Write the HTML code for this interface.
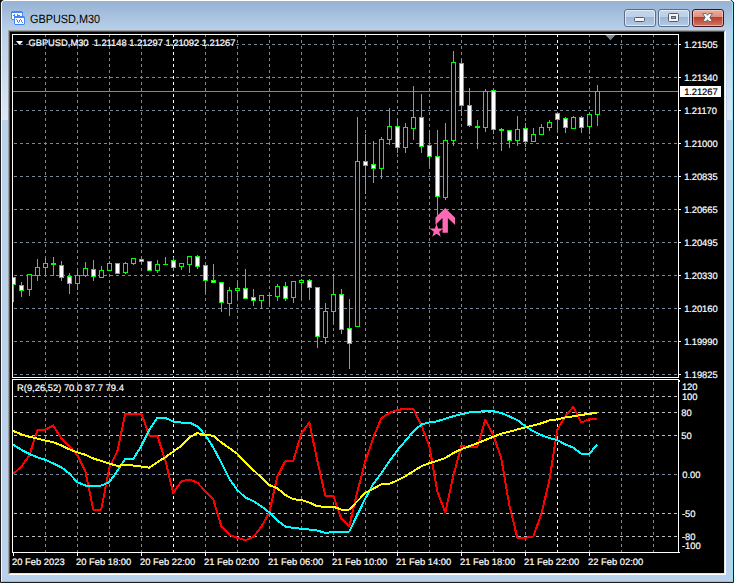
<!DOCTYPE html>
<html><head><meta charset="utf-8"><title>GBPUSD,M30</title>
<style>
html,body{margin:0;padding:0;}
body{text-rendering:geometricPrecision;width:736px;height:583px;position:relative;overflow:hidden;background:#fff;font-family:"Liberation Sans",sans-serif;}
#win{position:absolute;left:0;top:-1px;width:734px;height:584px;box-sizing:border-box;border:1px solid #1c1c1c;border-radius:5px 5px 0 0;background:linear-gradient(#96b2d3 1px,#b9d1ea 31px,#b9d1ea 100%);overflow:hidden;}
#hl{position:absolute;left:0;top:0;right:0;bottom:0;box-sizing:border-box;border-top:1px solid #fff;border-left:1px solid #f4f8fc;border-right:1px solid #8fe4f6;border-bottom:1px solid #58d8f2;border-radius:4px 4px 0 0;}
#client{position:absolute;left:8px;top:30px;width:718px;height:545px;background:#000;box-sizing:border-box;border-top:1px solid #a0a0a0;border-left:1px solid #a0a0a0;border-right:1px solid #fff;border-bottom:1px solid #fff;}
#client2{position:absolute;left:9px;top:31px;width:716px;height:543px;box-sizing:border-box;border-top:1px solid #505050;border-left:1px solid #505050;border-right:1px solid #e3e3e3;border-bottom:1px solid #e3e3e3;}
.t{position:absolute;color:#fff;-webkit-text-stroke:0.2px currentColor;font-size:9.4px;line-height:10px;letter-spacing:0px;white-space:pre;}
#title{position:absolute;left:30px;top:12px;font-size:12px;line-height:14px;color:#000;white-space:pre;transform:scaleX(0.905);transform-origin:0 0;}
.btn{position:absolute;top:9px;height:18px;width:32px;box-sizing:border-box;border:1px solid #5c6b87;border-radius:3px;background:linear-gradient(#c3d5ea 0,#bcd0e7 7px,#9bb6d5 7px,#b3cbe5 16px);box-shadow:inset 0 0 0 1px rgba(235,243,252,.75);}
.btn.x{border-color:#3f1222;background:linear-gradient(#eaaea0 0,#de9080 7px,#b93d25 7px,#cf7862 16px);box-shadow:inset 0 0 0 1px rgba(255,220,210,.55);}
</style></head><body>
<div style="position:absolute;left:0;top:0;width:4px;height:4px;background:#111"></div>
<div style="position:absolute;left:730px;top:0;width:4px;height:3px;background:linear-gradient(225deg,#fff 0,#fff 35%,#222 36%,#222 100%)"></div>
<div id="win"><div id="hl"></div></div>

<div style="position:absolute;left:2px;top:30px;width:6px;height:90px;background:linear-gradient(rgba(255,255,255,0),rgba(255,255,255,.5))"></div><div style="position:absolute;left:727px;top:30px;width:5px;height:90px;background:linear-gradient(rgba(255,255,255,0),rgba(255,255,255,.5))"></div>
<div id="client"></div><div id="client2"></div>
<svg width="736" height="583" viewBox="0 0 736 583" style="position:absolute;left:0;top:0" shape-rendering="crispEdges">
<line x1="14" y1="44.5" x2="678" y2="44.5" stroke="#778899" stroke-width="1" stroke-dasharray="3 3"/>
<line x1="14" y1="77.5" x2="678" y2="77.5" stroke="#778899" stroke-width="1" stroke-dasharray="3 3"/>
<line x1="14" y1="110.5" x2="678" y2="110.5" stroke="#778899" stroke-width="1" stroke-dasharray="3 3"/>
<line x1="14" y1="143.5" x2="678" y2="143.5" stroke="#778899" stroke-width="1" stroke-dasharray="3 3"/>
<line x1="14" y1="176.5" x2="678" y2="176.5" stroke="#778899" stroke-width="1" stroke-dasharray="3 3"/>
<line x1="14" y1="209.5" x2="678" y2="209.5" stroke="#778899" stroke-width="1" stroke-dasharray="3 3"/>
<line x1="14" y1="242.5" x2="678" y2="242.5" stroke="#778899" stroke-width="1" stroke-dasharray="3 3"/>
<line x1="14" y1="275.5" x2="678" y2="275.5" stroke="#778899" stroke-width="1" stroke-dasharray="3 3"/>
<line x1="14" y1="308.5" x2="678" y2="308.5" stroke="#778899" stroke-width="1" stroke-dasharray="3 3"/>
<line x1="14" y1="341.5" x2="678" y2="341.5" stroke="#778899" stroke-width="1" stroke-dasharray="3 3"/>
<line x1="14" y1="374.5" x2="678" y2="374.5" stroke="#778899" stroke-width="1" stroke-dasharray="3 3"/>
<line x1="45.5" y1="34" x2="45.5" y2="377" stroke="#778899" stroke-width="1" stroke-dasharray="3 3"/>
<line x1="45.5" y1="382" x2="45.5" y2="552" stroke="#778899" stroke-width="1" stroke-dasharray="3 3"/>
<line x1="77.5" y1="34" x2="77.5" y2="377" stroke="#778899" stroke-width="1" stroke-dasharray="3 3"/>
<line x1="77.5" y1="382" x2="77.5" y2="552" stroke="#778899" stroke-width="1" stroke-dasharray="3 3"/>
<line x1="109.5" y1="34" x2="109.5" y2="377" stroke="#778899" stroke-width="1" stroke-dasharray="3 3"/>
<line x1="109.5" y1="382" x2="109.5" y2="552" stroke="#778899" stroke-width="1" stroke-dasharray="3 3"/>
<line x1="141.5" y1="34" x2="141.5" y2="377" stroke="#778899" stroke-width="1" stroke-dasharray="3 3"/>
<line x1="141.5" y1="382" x2="141.5" y2="552" stroke="#778899" stroke-width="1" stroke-dasharray="3 3"/>
<line x1="173.5" y1="34" x2="173.5" y2="377" stroke="#ffffff" stroke-width="1" stroke-dasharray="3 3"/>
<line x1="173.5" y1="382" x2="173.5" y2="552" stroke="#ffffff" stroke-width="1" stroke-dasharray="3 3"/>
<line x1="205.5" y1="34" x2="205.5" y2="377" stroke="#778899" stroke-width="1" stroke-dasharray="3 3"/>
<line x1="205.5" y1="382" x2="205.5" y2="552" stroke="#778899" stroke-width="1" stroke-dasharray="3 3"/>
<line x1="237.5" y1="34" x2="237.5" y2="377" stroke="#778899" stroke-width="1" stroke-dasharray="3 3"/>
<line x1="237.5" y1="382" x2="237.5" y2="552" stroke="#778899" stroke-width="1" stroke-dasharray="3 3"/>
<line x1="269.5" y1="34" x2="269.5" y2="377" stroke="#778899" stroke-width="1" stroke-dasharray="3 3"/>
<line x1="269.5" y1="382" x2="269.5" y2="552" stroke="#778899" stroke-width="1" stroke-dasharray="3 3"/>
<line x1="301.5" y1="34" x2="301.5" y2="377" stroke="#778899" stroke-width="1" stroke-dasharray="3 3"/>
<line x1="301.5" y1="382" x2="301.5" y2="552" stroke="#778899" stroke-width="1" stroke-dasharray="3 3"/>
<line x1="333.5" y1="34" x2="333.5" y2="377" stroke="#778899" stroke-width="1" stroke-dasharray="3 3"/>
<line x1="333.5" y1="382" x2="333.5" y2="552" stroke="#778899" stroke-width="1" stroke-dasharray="3 3"/>
<line x1="365.5" y1="34" x2="365.5" y2="377" stroke="#778899" stroke-width="1" stroke-dasharray="3 3"/>
<line x1="365.5" y1="382" x2="365.5" y2="552" stroke="#778899" stroke-width="1" stroke-dasharray="3 3"/>
<line x1="397.5" y1="34" x2="397.5" y2="377" stroke="#778899" stroke-width="1" stroke-dasharray="3 3"/>
<line x1="397.5" y1="382" x2="397.5" y2="552" stroke="#778899" stroke-width="1" stroke-dasharray="3 3"/>
<line x1="429.5" y1="34" x2="429.5" y2="377" stroke="#778899" stroke-width="1" stroke-dasharray="3 3"/>
<line x1="429.5" y1="382" x2="429.5" y2="552" stroke="#778899" stroke-width="1" stroke-dasharray="3 3"/>
<line x1="461.5" y1="34" x2="461.5" y2="377" stroke="#778899" stroke-width="1" stroke-dasharray="3 3"/>
<line x1="461.5" y1="382" x2="461.5" y2="552" stroke="#778899" stroke-width="1" stroke-dasharray="3 3"/>
<line x1="493.5" y1="34" x2="493.5" y2="377" stroke="#778899" stroke-width="1" stroke-dasharray="3 3"/>
<line x1="493.5" y1="382" x2="493.5" y2="552" stroke="#778899" stroke-width="1" stroke-dasharray="3 3"/>
<line x1="525.5" y1="34" x2="525.5" y2="377" stroke="#778899" stroke-width="1" stroke-dasharray="3 3"/>
<line x1="525.5" y1="382" x2="525.5" y2="552" stroke="#778899" stroke-width="1" stroke-dasharray="3 3"/>
<line x1="557.5" y1="34" x2="557.5" y2="377" stroke="#ffffff" stroke-width="1" stroke-dasharray="3 3"/>
<line x1="557.5" y1="382" x2="557.5" y2="552" stroke="#ffffff" stroke-width="1" stroke-dasharray="3 3"/>
<line x1="589.5" y1="34" x2="589.5" y2="377" stroke="#778899" stroke-width="1" stroke-dasharray="3 3"/>
<line x1="589.5" y1="382" x2="589.5" y2="552" stroke="#778899" stroke-width="1" stroke-dasharray="3 3"/>
<line x1="621.5" y1="34" x2="621.5" y2="377" stroke="#778899" stroke-width="1" stroke-dasharray="3 3"/>
<line x1="621.5" y1="382" x2="621.5" y2="552" stroke="#778899" stroke-width="1" stroke-dasharray="3 3"/>
<line x1="653.5" y1="34" x2="653.5" y2="377" stroke="#778899" stroke-width="1" stroke-dasharray="3 3"/>
<line x1="653.5" y1="382" x2="653.5" y2="552" stroke="#778899" stroke-width="1" stroke-dasharray="3 3"/>
<line x1="14" y1="396.5" x2="678" y2="396.5" stroke="#c0c0c0" stroke-width="1" stroke-dasharray="3 3"/>
<line x1="14" y1="412.5" x2="678" y2="412.5" stroke="#c0c0c0" stroke-width="1" stroke-dasharray="3 3"/>
<line x1="14" y1="435.5" x2="678" y2="435.5" stroke="#c0c0c0" stroke-width="1" stroke-dasharray="3 3"/>
<line x1="14" y1="474.5" x2="678" y2="474.5" stroke="#778899" stroke-width="1" stroke-dasharray="3 3"/>
<line x1="14" y1="513.5" x2="678" y2="513.5" stroke="#c0c0c0" stroke-width="1" stroke-dasharray="3 3"/>
<line x1="14" y1="536.5" x2="678" y2="536.5" stroke="#c0c0c0" stroke-width="1" stroke-dasharray="3 3"/>
<line x1="13" y1="91.5" x2="678" y2="91.5" stroke="#778899" stroke-width="1"/>
<clipPath id="cp"><rect x="13" y="35" width="665" height="342"/></clipPath><g clip-path="url(#cp)">
<rect x="13" y="277" width="1" height="25" fill="#00ff00"/>
<rect x="11" y="277" width="5" height="8" fill="#00ff00"/>
<rect x="12" y="278" width="3" height="6" fill="#fff"/>
<rect x="21" y="282" width="1" height="15" fill="#00ff00"/>
<rect x="19" y="285" width="5" height="6" fill="#00ff00"/>
<rect x="20" y="286" width="3" height="4" fill="#fff"/>
<rect x="29" y="274" width="1" height="22" fill="#00ff00"/>
<rect x="27" y="274" width="5" height="16" fill="#00ff00"/>
<rect x="28" y="275" width="3" height="14" fill="#000"/>
<rect x="37" y="259" width="1" height="22" fill="#00ff00"/>
<rect x="35" y="267" width="5" height="9" fill="#00ff00"/>
<rect x="36" y="268" width="3" height="7" fill="#000"/>
<rect x="45" y="258" width="1" height="17" fill="#00ff00"/>
<rect x="43" y="263" width="5" height="5" fill="#00ff00"/>
<rect x="44" y="264" width="3" height="3" fill="#000"/>
<rect x="53" y="257" width="1" height="19" fill="#00ff00"/>
<rect x="51" y="263" width="5" height="2" fill="#00ff00"/>
<rect x="61" y="261" width="1" height="20" fill="#00ff00"/>
<rect x="59" y="265" width="5" height="13" fill="#00ff00"/>
<rect x="60" y="266" width="3" height="11" fill="#fff"/>
<rect x="69" y="273" width="1" height="21" fill="#00ff00"/>
<rect x="67" y="276" width="5" height="8" fill="#00ff00"/>
<rect x="68" y="277" width="3" height="6" fill="#fff"/>
<rect x="77" y="270" width="1" height="20" fill="#00ff00"/>
<rect x="75" y="275" width="5" height="9" fill="#00ff00"/>
<rect x="76" y="276" width="3" height="7" fill="#000"/>
<rect x="85" y="262" width="1" height="15" fill="#00ff00"/>
<rect x="83" y="268" width="5" height="8" fill="#00ff00"/>
<rect x="84" y="269" width="3" height="6" fill="#000"/>
<rect x="93" y="260" width="1" height="21" fill="#00ff00"/>
<rect x="91" y="269" width="5" height="8" fill="#00ff00"/>
<rect x="92" y="270" width="3" height="6" fill="#fff"/>
<rect x="101" y="266" width="1" height="12" fill="#00ff00"/>
<rect x="99" y="270" width="5" height="8" fill="#00ff00"/>
<rect x="100" y="271" width="3" height="6" fill="#000"/>
<rect x="109" y="261" width="1" height="10" fill="#00ff00"/>
<rect x="107" y="263" width="5" height="8" fill="#00ff00"/>
<rect x="108" y="264" width="3" height="6" fill="#000"/>
<rect x="117" y="263" width="1" height="11" fill="#00ff00"/>
<rect x="115" y="263" width="5" height="11" fill="#00ff00"/>
<rect x="116" y="264" width="3" height="9" fill="#fff"/>
<rect x="125" y="262" width="1" height="12" fill="#00ff00"/>
<rect x="123" y="263" width="5" height="10" fill="#00ff00"/>
<rect x="124" y="264" width="3" height="8" fill="#000"/>
<rect x="133" y="258" width="1" height="7" fill="#00ff00"/>
<rect x="131" y="258" width="5" height="6" fill="#00ff00"/>
<rect x="132" y="259" width="3" height="4" fill="#000"/>
<rect x="141" y="259" width="1" height="5" fill="#00ff00"/>
<rect x="139" y="259" width="5" height="3" fill="#00ff00"/>
<rect x="140" y="260" width="3" height="1" fill="#fff"/>
<rect x="149" y="261" width="1" height="10" fill="#00ff00"/>
<rect x="147" y="261" width="5" height="10" fill="#00ff00"/>
<rect x="148" y="262" width="3" height="8" fill="#fff"/>
<rect x="157" y="260" width="1" height="13" fill="#00ff00"/>
<rect x="155" y="264" width="5" height="7" fill="#00ff00"/>
<rect x="156" y="265" width="3" height="5" fill="#000"/>
<rect x="165" y="257" width="1" height="8" fill="#00ff00"/>
<rect x="163" y="264" width="5" height="1" fill="#00ff00"/>
<rect x="173" y="257" width="1" height="14" fill="#00ff00"/>
<rect x="171" y="260" width="5" height="8" fill="#00ff00"/>
<rect x="172" y="261" width="3" height="6" fill="#fff"/>
<rect x="181" y="263" width="1" height="7" fill="#00ff00"/>
<rect x="179" y="263" width="5" height="4" fill="#00ff00"/>
<rect x="180" y="264" width="3" height="2" fill="#000"/>
<rect x="189" y="256" width="1" height="17" fill="#00ff00"/>
<rect x="187" y="256" width="5" height="9" fill="#00ff00"/>
<rect x="188" y="257" width="3" height="7" fill="#000"/>
<rect x="197" y="255" width="1" height="14" fill="#00ff00"/>
<rect x="195" y="256" width="5" height="11" fill="#00ff00"/>
<rect x="196" y="257" width="3" height="9" fill="#fff"/>
<rect x="205" y="265" width="1" height="28" fill="#00ff00"/>
<rect x="203" y="265" width="5" height="16" fill="#00ff00"/>
<rect x="204" y="266" width="3" height="14" fill="#fff"/>
<rect x="213" y="264" width="1" height="19" fill="#00ff00"/>
<rect x="211" y="280" width="5" height="3" fill="#00ff00"/>
<rect x="212" y="281" width="3" height="1" fill="#fff"/>
<rect x="221" y="282" width="1" height="30" fill="#00ff00"/>
<rect x="219" y="282" width="5" height="21" fill="#00ff00"/>
<rect x="220" y="283" width="3" height="19" fill="#fff"/>
<rect x="229" y="287" width="1" height="29" fill="#00ff00"/>
<rect x="227" y="290" width="5" height="14" fill="#00ff00"/>
<rect x="228" y="291" width="3" height="12" fill="#000"/>
<rect x="237" y="282" width="1" height="17" fill="#00ff00"/>
<rect x="235" y="288" width="5" height="3" fill="#00ff00"/>
<rect x="236" y="289" width="3" height="1" fill="#000"/>
<rect x="245" y="269" width="1" height="30" fill="#00ff00"/>
<rect x="243" y="288" width="5" height="11" fill="#00ff00"/>
<rect x="244" y="289" width="3" height="9" fill="#fff"/>
<rect x="253" y="289" width="1" height="17" fill="#00ff00"/>
<rect x="251" y="297" width="5" height="4" fill="#00ff00"/>
<rect x="252" y="298" width="3" height="2" fill="#fff"/>
<rect x="261" y="295" width="1" height="14" fill="#00ff00"/>
<rect x="259" y="295" width="5" height="6" fill="#00ff00"/>
<rect x="260" y="296" width="3" height="4" fill="#000"/>
<rect x="269" y="293" width="1" height="12" fill="#00ff00"/>
<rect x="267" y="295" width="5" height="1" fill="#00ff00"/>
<rect x="277" y="284" width="1" height="17" fill="#00ff00"/>
<rect x="275" y="286" width="5" height="11" fill="#00ff00"/>
<rect x="276" y="287" width="3" height="9" fill="#000"/>
<rect x="285" y="282" width="1" height="19" fill="#00ff00"/>
<rect x="283" y="286" width="5" height="13" fill="#00ff00"/>
<rect x="284" y="287" width="3" height="11" fill="#fff"/>
<rect x="293" y="281" width="1" height="22" fill="#00ff00"/>
<rect x="291" y="281" width="5" height="17" fill="#00ff00"/>
<rect x="292" y="282" width="3" height="15" fill="#000"/>
<rect x="301" y="279" width="1" height="21" fill="#00ff00"/>
<rect x="299" y="280" width="5" height="3" fill="#00ff00"/>
<rect x="300" y="281" width="3" height="1" fill="#000"/>
<rect x="309" y="279" width="1" height="21" fill="#00ff00"/>
<rect x="307" y="280" width="5" height="8" fill="#00ff00"/>
<rect x="308" y="281" width="3" height="6" fill="#fff"/>
<rect x="317" y="287" width="1" height="61" fill="#00ff00"/>
<rect x="315" y="287" width="5" height="50" fill="#00ff00"/>
<rect x="316" y="288" width="3" height="48" fill="#fff"/>
<rect x="325" y="303" width="1" height="41" fill="#00ff00"/>
<rect x="323" y="311" width="5" height="27" fill="#00ff00"/>
<rect x="324" y="312" width="3" height="25" fill="#000"/>
<rect x="333" y="274" width="1" height="50" fill="#00ff00"/>
<rect x="331" y="294" width="5" height="18" fill="#00ff00"/>
<rect x="332" y="295" width="3" height="16" fill="#000"/>
<rect x="341" y="289" width="1" height="45" fill="#00ff00"/>
<rect x="339" y="294" width="5" height="36" fill="#00ff00"/>
<rect x="340" y="295" width="3" height="34" fill="#fff"/>
<rect x="349" y="299" width="1" height="70" fill="#00ff00"/>
<rect x="347" y="328" width="5" height="16" fill="#00ff00"/>
<rect x="348" y="329" width="3" height="14" fill="#fff"/>
<rect x="357" y="117" width="1" height="210" fill="#00ff00"/>
<rect x="355" y="161" width="5" height="166" fill="#00ff00"/>
<rect x="356" y="162" width="3" height="164" fill="#000"/>
<rect x="365" y="134" width="1" height="60" fill="#00ff00"/>
<rect x="363" y="161" width="5" height="5" fill="#00ff00"/>
<rect x="364" y="162" width="3" height="3" fill="#fff"/>
<rect x="373" y="141" width="1" height="42" fill="#00ff00"/>
<rect x="371" y="164" width="5" height="5" fill="#00ff00"/>
<rect x="372" y="165" width="3" height="3" fill="#fff"/>
<rect x="381" y="137" width="1" height="42" fill="#00ff00"/>
<rect x="379" y="139" width="5" height="30" fill="#00ff00"/>
<rect x="380" y="140" width="3" height="28" fill="#000"/>
<rect x="389" y="108" width="1" height="37" fill="#00ff00"/>
<rect x="387" y="126" width="5" height="14" fill="#00ff00"/>
<rect x="388" y="127" width="3" height="12" fill="#000"/>
<rect x="397" y="119" width="1" height="34" fill="#00ff00"/>
<rect x="395" y="126" width="5" height="22" fill="#00ff00"/>
<rect x="396" y="127" width="3" height="20" fill="#fff"/>
<rect x="405" y="123" width="1" height="30" fill="#00ff00"/>
<rect x="403" y="127" width="5" height="21" fill="#00ff00"/>
<rect x="404" y="128" width="3" height="19" fill="#000"/>
<rect x="413" y="86" width="1" height="54" fill="#00ff00"/>
<rect x="411" y="117" width="5" height="12" fill="#00ff00"/>
<rect x="412" y="118" width="3" height="10" fill="#000"/>
<rect x="421" y="94" width="1" height="59" fill="#00ff00"/>
<rect x="419" y="117" width="5" height="30" fill="#00ff00"/>
<rect x="420" y="118" width="3" height="28" fill="#fff"/>
<rect x="429" y="130" width="1" height="36" fill="#00ff00"/>
<rect x="427" y="145" width="5" height="12" fill="#00ff00"/>
<rect x="428" y="146" width="3" height="10" fill="#fff"/>
<rect x="437" y="130" width="1" height="86" fill="#00ff00"/>
<rect x="435" y="156" width="5" height="41" fill="#00ff00"/>
<rect x="436" y="157" width="3" height="39" fill="#fff"/>
<rect x="445" y="123" width="1" height="77" fill="#00ff00"/>
<rect x="443" y="140" width="5" height="58" fill="#00ff00"/>
<rect x="444" y="141" width="3" height="56" fill="#000"/>
<rect x="453" y="51" width="1" height="95" fill="#00ff00"/>
<rect x="451" y="62" width="5" height="79" fill="#00ff00"/>
<rect x="452" y="63" width="3" height="77" fill="#000"/>
<rect x="461" y="61" width="1" height="55" fill="#00ff00"/>
<rect x="459" y="63" width="5" height="43" fill="#00ff00"/>
<rect x="460" y="64" width="3" height="41" fill="#fff"/>
<rect x="469" y="88" width="1" height="39" fill="#00ff00"/>
<rect x="467" y="105" width="5" height="21" fill="#00ff00"/>
<rect x="468" y="106" width="3" height="19" fill="#fff"/>
<rect x="477" y="120" width="1" height="29" fill="#00ff00"/>
<rect x="475" y="126" width="5" height="2" fill="#00ff00"/>
<rect x="485" y="89" width="1" height="43" fill="#00ff00"/>
<rect x="483" y="91" width="5" height="37" fill="#00ff00"/>
<rect x="484" y="92" width="3" height="35" fill="#000"/>
<rect x="493" y="89" width="1" height="45" fill="#00ff00"/>
<rect x="491" y="90" width="5" height="40" fill="#00ff00"/>
<rect x="492" y="91" width="3" height="38" fill="#fff"/>
<rect x="501" y="128" width="1" height="23" fill="#00ff00"/>
<rect x="499" y="129" width="5" height="2" fill="#00ff00"/>
<rect x="509" y="130" width="1" height="18" fill="#00ff00"/>
<rect x="507" y="130" width="5" height="11" fill="#00ff00"/>
<rect x="508" y="131" width="3" height="9" fill="#fff"/>
<rect x="517" y="116" width="1" height="30" fill="#00ff00"/>
<rect x="515" y="129" width="5" height="12" fill="#00ff00"/>
<rect x="516" y="130" width="3" height="10" fill="#000"/>
<rect x="525" y="123" width="1" height="24" fill="#00ff00"/>
<rect x="523" y="128" width="5" height="14" fill="#00ff00"/>
<rect x="524" y="129" width="3" height="12" fill="#fff"/>
<rect x="533" y="128" width="1" height="14" fill="#00ff00"/>
<rect x="531" y="134" width="5" height="8" fill="#00ff00"/>
<rect x="532" y="135" width="3" height="6" fill="#000"/>
<rect x="541" y="124" width="1" height="11" fill="#00ff00"/>
<rect x="539" y="127" width="5" height="8" fill="#00ff00"/>
<rect x="540" y="128" width="3" height="6" fill="#000"/>
<rect x="549" y="120" width="1" height="11" fill="#00ff00"/>
<rect x="547" y="122" width="5" height="6" fill="#00ff00"/>
<rect x="548" y="123" width="3" height="4" fill="#000"/>
<rect x="557" y="112" width="1" height="21" fill="#00ff00"/>
<rect x="555" y="113" width="5" height="7" fill="#00ff00"/>
<rect x="556" y="114" width="3" height="5" fill="#fff"/>
<rect x="565" y="117" width="1" height="16" fill="#00ff00"/>
<rect x="563" y="118" width="5" height="10" fill="#00ff00"/>
<rect x="564" y="119" width="3" height="8" fill="#fff"/>
<rect x="573" y="116" width="1" height="13" fill="#00ff00"/>
<rect x="571" y="117" width="5" height="12" fill="#00ff00"/>
<rect x="572" y="118" width="3" height="10" fill="#000"/>
<rect x="581" y="116" width="1" height="17" fill="#00ff00"/>
<rect x="579" y="117" width="5" height="11" fill="#00ff00"/>
<rect x="580" y="118" width="3" height="9" fill="#fff"/>
<rect x="589" y="113" width="1" height="21" fill="#00ff00"/>
<rect x="587" y="114" width="5" height="13" fill="#00ff00"/>
<rect x="588" y="115" width="3" height="11" fill="#000"/>
<rect x="597" y="85" width="1" height="41" fill="#00ff00"/>
<rect x="595" y="91" width="5" height="24" fill="#00ff00"/>
<rect x="596" y="92" width="3" height="22" fill="#000"/>
</g>
<rect x="12.5" y="34.5" width="666" height="343" fill="none" stroke="#fff"/>
<rect x="12.5" y="379.5" width="666" height="173" fill="none" stroke="#fff"/>
<rect x="679" y="44" width="2" height="1" fill="#fff"/>
<rect x="679" y="77" width="2" height="1" fill="#fff"/>
<rect x="679" y="110" width="2" height="1" fill="#fff"/>
<rect x="679" y="143" width="2" height="1" fill="#fff"/>
<rect x="679" y="176" width="2" height="1" fill="#fff"/>
<rect x="679" y="209" width="2" height="1" fill="#fff"/>
<rect x="679" y="242" width="2" height="1" fill="#fff"/>
<rect x="679" y="275" width="2" height="1" fill="#fff"/>
<rect x="679" y="308" width="2" height="1" fill="#fff"/>
<rect x="679" y="341" width="2" height="1" fill="#fff"/>
<rect x="679" y="374" width="2" height="1" fill="#fff"/>
<rect x="679" y="552" width="1" height="1" fill="#fff"/>
<rect x="679" y="380" width="1" height="2" fill="#fff"/>
<rect x="13" y="553" width="1" height="3" fill="#fff"/>
<rect x="77" y="553" width="1" height="3" fill="#fff"/>
<rect x="141" y="553" width="1" height="3" fill="#fff"/>
<rect x="205" y="553" width="1" height="3" fill="#fff"/>
<rect x="269" y="553" width="1" height="3" fill="#fff"/>
<rect x="333" y="553" width="1" height="3" fill="#fff"/>
<rect x="397" y="553" width="1" height="3" fill="#fff"/>
<rect x="461" y="553" width="1" height="3" fill="#fff"/>
<rect x="525" y="553" width="1" height="3" fill="#fff"/>
<rect x="589" y="553" width="1" height="3" fill="#fff"/>
<polygon points="605.5,35 615.5,35 610.5,40.3" fill="#778899" shape-rendering="auto"/>
<polygon points="16,41 23,41 19.5,45" fill="#fff" shape-rendering="auto"/>
<g shape-rendering="crispEdges">
<polyline points="13.3,474 21.3,466.5 29.3,455.5 37.3,430.5 45.3,429.75 53.3,425.5 61.3,438.5 69.3,446.5 77.3,455 85.3,471 93.3,509.5 101.3,509.5 109.3,467.5 117.3,451.5 125.3,413.5 133.3,413.5 141.3,413.5 149.3,435.5 157.3,435.5 165.3,460.5 173.3,493 181.3,481.25 189.3,479.5 197.3,482.5 205.3,491.25 213.3,499.5 221.3,526 229.3,534.75 237.3,537.75 245.3,540.25 253.3,537 261.3,526.75 269.3,512.5 277.3,476.5 285.3,461.25 293.3,460.75 301.3,433.75 309.3,422.5 317.3,460.5 325.3,495.75 333.3,495.75 341.3,518.75 349.3,526 357.3,492 365.3,461.25 373.3,437.5 381.3,418.25 389.3,413 397.3,410 405.3,408.75 413.3,408.75 421.3,425 429.3,446 437.3,491.25 445.3,512.5 453.3,476 461.3,446 469.3,447 477.3,447 485.3,420 493.3,435 501.3,458.5 509.3,505 517.3,537.75 525.3,537.75 533.3,536.5 541.3,514 549.3,480.5 557.3,430 565.3,416.25 573.3,406.75 581.3,422.5 589.3,419.25 597.3,419.25" fill="none" stroke="#ff0000" stroke-width="2" stroke-linejoin="round" stroke-linecap="butt"/>
<polyline points="13.3,444.75 21.3,449.75 29.3,454 37.3,457.25 45.3,459.75 53.3,463.5 61.3,467.25 69.3,473.5 77.3,482.25 85.3,485.5 93.3,485.5 101.3,485.5 109.3,482.25 117.3,471 125.3,459 133.3,459 141.3,446 149.3,429.75 157.3,417.75 165.3,418 173.3,421.5 181.3,422.5 189.3,422.5 197.3,426.25 205.3,435 213.3,447.5 221.3,462.5 229.3,478.75 237.3,490 245.3,497.5 253.3,501 261.3,506.25 269.3,512.5 277.3,520.5 285.3,526.5 293.3,528 301.3,528.75 309.3,529.5 317.3,530.5 325.3,533 333.3,532 341.3,531.75 349.3,531.5 357.3,515 365.3,498.5 373.3,483.75 381.3,473.5 389.3,461.25 397.3,450.5 405.3,441 413.3,431.5 421.3,424.5 429.3,422.5 437.3,421.25 445.3,418.75 453.3,416.25 461.3,414.25 469.3,412.5 477.3,411.75 485.3,411.25 493.3,411.25 501.3,413 509.3,416.5 517.3,420 525.3,426.25 533.3,431.25 541.3,435 549.3,438 557.3,440 565.3,444.5 573.3,447.5 581.3,453.75 589.3,453.75 597.3,444.5" fill="none" stroke="#00ffff" stroke-width="2" stroke-linejoin="round" stroke-linecap="butt"/>
<polyline points="13.3,431 21.3,434.25 29.3,436.75 37.3,438.5 45.3,440.5 53.3,442.25 61.3,445.5 69.3,449.25 77.3,452.25 85.3,454.75 93.3,458.5 101.3,461 109.3,463.5 117.3,466 125.3,464.75 133.3,465.5 141.3,466.5 149.3,467.75 157.3,462.25 165.3,457.25 173.3,451.5 181.3,446 189.3,437.5 197.3,433 205.3,435 213.3,435.75 221.3,442.5 229.3,448 237.3,453.75 245.3,462.5 253.3,470 261.3,477.5 269.3,485 277.3,488.25 285.3,495 293.3,499.25 301.3,500 309.3,502.5 317.3,506.25 325.3,506.75 333.3,506.75 341.3,509.5 349.3,509.5 357.3,501.25 365.3,493 373.3,488.75 381.3,484.25 389.3,483.75 397.3,480.5 405.3,476.25 413.3,471.25 421.3,466.25 429.3,463.25 437.3,460.75 445.3,458 453.3,453 461.3,449.25 469.3,446.25 477.3,443.25 485.3,440 493.3,436.75 501.3,433.75 509.3,431.75 517.3,429.5 525.3,427.5 533.3,425.5 541.3,423.25 549.3,420.5 557.3,419.25 565.3,417.5 573.3,416.25 581.3,415 589.3,413.75 597.3,413" fill="none" stroke="#ffff00" stroke-width="2" stroke-linejoin="round" stroke-linecap="butt"/>
</g>
<g shape-rendering="auto">
<polygon points="445.2,208 455.1,217.8 455.1,225 447.9,217.9 447.9,232.8 442.5,232.8 442.5,217.9 435.5,224.7 435.5,217.6" fill="#ff69b4"/>
<polygon points="436.5,223.6 438.1,228.6 443.4,228.6 439.2,231.8 440.8,236.8 436.5,233.7 432.2,236.8 433.8,231.8 429.6,228.6 434.9,228.6" fill="#ff69b4"/>
</g>
</svg>
<svg style="position:absolute;left:10px;top:10px" width="17" height="17" viewBox="10 10 17 17" shape-rendering="crispEdges">
<rect x="11" y="11" width="12" height="9" fill="#4585f6"/><rect x="12" y="13" width="10" height="6" fill="#fff"/>
<rect x="13" y="15" width="2" height="1" fill="#4585f6"/><rect x="14" y="14" width="1" height="1" fill="#4585f6"/><rect x="17" y="14" width="1" height="2" fill="#4585f6"/><rect x="18" y="15" width="2" height="1" fill="#4585f6"/>
<rect x="14" y="16" width="11" height="9" fill="#4585f6"/><rect x="15" y="18" width="9" height="6" fill="#fff"/>
<rect x="16" y="19" width="1" height="1" fill="#4585f6"/><rect x="17" y="20" width="1" height="2" fill="#4585f6"/><rect x="18" y="22" width="1" height="1" fill="#4585f6"/><rect x="19" y="20" width="1" height="2" fill="#4585f6"/><rect x="20" y="19" width="1" height="1" fill="#4585f6"/><rect x="21" y="20" width="1" height="2" fill="#4585f6"/><rect x="22" y="22" width="1" height="1" fill="#4585f6"/>
<g fill="#a6c0de" fill-opacity=".75"><rect x="11" y="11" width="1" height="1"/><rect x="22" y="11" width="1" height="1"/><rect x="11" y="19" width="1" height="1"/><rect x="24" y="16" width="1" height="1"/><rect x="14" y="24" width="1" height="1"/><rect x="24" y="24" width="1" height="1"/></g>
</svg>
<div id="title">GBPUSD,M30</div>
<div class="t" style="left:28.4px;top:37.5px;letter-spacing:-0.03px">GBPUSD,M30  1.21148 1.21297 1.21092 1.21267</div>
<div class="t" style="left:17px;top:383px">R(9,26,52) 70.0 37.7 79.4</div>
<div class="t" style="left:684.2px;top:39.5px;letter-spacing:-0.08px">1.21505</div>
<div class="t" style="left:684.2px;top:72.5px;letter-spacing:-0.08px">1.21340</div>
<div class="t" style="left:684.2px;top:105.5px;letter-spacing:-0.08px">1.21170</div>
<div class="t" style="left:684.2px;top:138.5px;letter-spacing:-0.08px">1.21000</div>
<div class="t" style="left:684.2px;top:171.5px;letter-spacing:-0.08px">1.20835</div>
<div class="t" style="left:684.2px;top:204.5px;letter-spacing:-0.08px">1.20665</div>
<div class="t" style="left:684.2px;top:237.5px;letter-spacing:-0.08px">1.20495</div>
<div class="t" style="left:684.2px;top:270.5px;letter-spacing:-0.08px">1.20330</div>
<div class="t" style="left:684.2px;top:303.5px;letter-spacing:-0.08px">1.20160</div>
<div class="t" style="left:684.2px;top:336.5px;letter-spacing:-0.08px">1.19990</div>
<div class="t" style="left:684.2px;top:369.5px;letter-spacing:-0.08px">1.19825</div>
<div class="t" style="left:680px;top:86px;width:41px;height:11px;background:#fff;color:#000;"><span style="position:absolute;left:4.2px;top:1px;letter-spacing:-0.08px">1.21267</span></div>
<div class="t" style="left:681.9px;top:381.5px">120</div>
<div class="t" style="left:681.9px;top:391.5px">100</div>
<div class="t" style="left:681.2px;top:407.5px">80</div>
<div class="t" style="left:681.2px;top:430.5px">50</div>
<div class="t" style="left:682.2px;top:469.5px">0.00</div>
<div class="t" style="left:681.9px;top:508.5px">-50</div>
<div class="t" style="left:681.9px;top:531.5px">-80</div>
<div class="t" style="left:681.9px;top:540.5px">-100</div>
<div class="t" style="left:12px;top:557px">20 Feb 2023</div>
<div class="t" style="left:76px;top:557px">20 Feb 18:00</div>
<div class="t" style="left:140px;top:557px">20 Feb 22:00</div>
<div class="t" style="left:204px;top:557px">21 Feb 02:00</div>
<div class="t" style="left:268px;top:557px">21 Feb 06:00</div>
<div class="t" style="left:332px;top:557px">21 Feb 10:00</div>
<div class="t" style="left:396px;top:557px">21 Feb 14:00</div>
<div class="t" style="left:460px;top:557px">21 Feb 18:00</div>
<div class="t" style="left:524px;top:557px">21 Feb 22:00</div>
<div class="t" style="left:588px;top:557px">22 Feb 02:00</div>
<div class="btn" style="left:624px"></div>
<div class="btn" style="left:658px"></div>
<div class="btn x" style="left:692px"></div>
<svg style="position:absolute;left:620px;top:6px" width="110" height="24" viewBox="620 6 110 24">
<rect x="634.5" y="17.5" width="10" height="4" rx="1" fill="#f4f4f4" stroke="#525c6e"/>
<rect x="668.5" y="13.5" width="10" height="8" rx="1" fill="#f4f4f4" stroke="#525c6e"/>
<rect x="671.5" y="16.5" width="4" height="2" fill="#8aa6c8" stroke="#525c6e"/>
<path d="M702.6 13.6 L706.2 13.6 L707.5 15.3 L708.8 13.6 L712.4 13.6 L709.8 17.5 L712.4 21.4 L708.8 21.4 L707.5 19.7 L706.2 21.4 L702.6 21.4 L705.2 17.5 Z" fill="#fafafa" stroke="#4a546a" stroke-width="0.8" stroke-linejoin="round"/>
</svg>
</body></html>
